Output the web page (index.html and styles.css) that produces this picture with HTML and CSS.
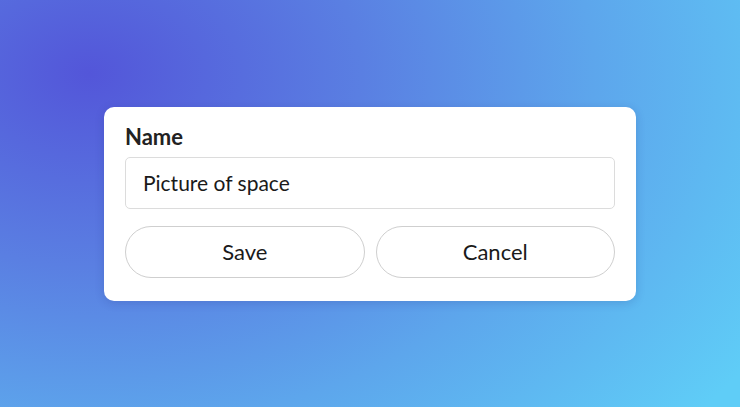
FILE: index.html
```html
<!DOCTYPE html>
<html>
<head>
<meta charset="utf-8">
<link rel="stylesheet" href="styles.css">
</head>
<body>
<main class="stage">
  <form class="card">
    <label class="label" for="name">Name</label>
    <input class="field" id="name" type="text" value="Picture of space">
    <div class="actions">
      <button type="button" class="btn">Save</button>
      <button type="button" class="btn">Cancel</button>
    </div>
  </form>
</main>
</body>
</html>
```
FILE: styles.css
```css
* { box-sizing: border-box; }
html, body { margin: 0; height: 100%; }
body {
  font-family: Lato, "Open Sans", sans-serif;
  background: radial-gradient(ellipse 105% 135% at 12% 18%, #5356d9 0%, #5a7fe2 35%, #5da6ec 65%, #5fcdf7 100%);
}
.stage {
  width: 740px;
  height: 407px;
  display: flex;
  align-items: center;
  justify-content: center;
}
.card {
  width: 532px;
  background: #fff;
  border-radius: 10px;
  padding: 16px 21px 23px;
  box-shadow: 0 2px 10px rgba(30, 40, 120, 0.18);
  display: flex;
  flex-direction: column;
}
.label {
  font-size: 22px;
  font-weight: 700;
  color: #222;
  line-height: 27px;
  margin-bottom: 7px;
}
.field {
  width: 100%;
  height: 52px;
  border: 1.5px solid #dcdcdc;
  border-radius: 5px;
  padding: 0 17px;
  font-family: inherit;
  font-size: 21px;
  color: #1a1a1a;
  outline: none;
}
.actions {
  display: grid;
  grid-template-columns: 1fr 1fr;
  gap: 11px;
  margin-top: 17px;
}
.btn {
  height: 52px;
  border: 1.5px solid #cfcfcf;
  border-radius: 26px;
  background: #fff;
  font-family: inherit;
  font-size: 22px;
  color: #1a1a1a;
}
```
